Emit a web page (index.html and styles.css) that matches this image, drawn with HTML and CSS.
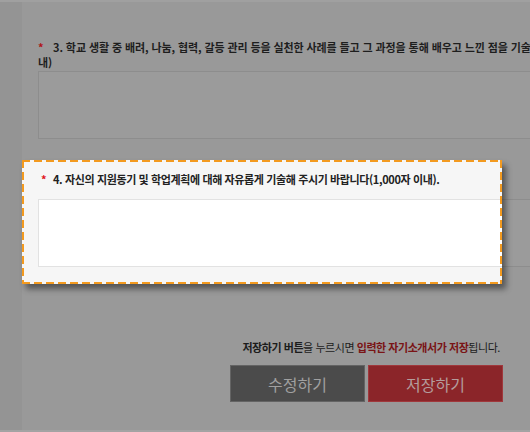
FILE: index.html
```html
<!DOCTYPE html>
<html lang="ko">
<head>
    <meta charset="UTF-8">
    <meta name="viewport" content="width=device-width, initial-scale=1.0">
    <title>자기소개서 작성</title>
    <link rel="stylesheet" href="styles.css">
</head>
<body>
    <div class="top-band"></div>
    <div class="page">
        <div class="q q3">
            <p class="q-label"><span class="req">*</span>3. 학교 생활 중 배려, 나눔, 협력, 갈등 관리 등을 실천한 사례를 들고 그 과정을 통해 배우고 느낀 점을 기술해 주시기 바랍니다(1,000자 이<br>내)</p>
            <div class="q-box"></div>
        </div>

        <div class="q q4">
            <p class="q-label hidden"><span class="req">*</span>4. 자신의 지원동기 및 학업계획에 대해 자유롭게 기술해 주시기 바랍니다(1,000자 이내).</p>
            <div class="q-box"></div>

            <div class="spotlight">
                <p class="q-label"><span class="req">*</span>4. 자신의 지원동기 및 학업계획에 대해 자유롭게 기술해 주시기 바랍니다(1,000자 이내).</p>
                <div class="q-box"></div>
            </div>
        </div>

        <div class="actions">
            <p class="notice"><b>저장하기 버튼</b>을 누르시면 <b class="red">입력한 자기소개서가 저장</b>됩니다.</p>
            <div class="btns">
                <button class="btn btn-edit">수정하기</button>
                <button class="btn btn-save">저장하기</button>
            </div>
        </div>
    </div>
    <div class="bottom-line"></div>
</body>
</html>
```

FILE: styles.css
```css
html, body {
    margin: 0;
    height: 100%;
    overflow: hidden;
}
body {
    background-color: #949494;
    font-family: "Noto Sans CJK KR", "Noto Sans", sans-serif;
    position: relative;
}
.top-band {
    height: 2px;
    background-color: #a0a0a0;
}
.page {
    margin-left: 22px;
    width: 760px;
    height: 430px;
    background-color: #999999;
}
.q {
    padding: 12px 16px 17px;
}
.q3 {
    padding-top: 38px;
    padding-bottom: 0;
}
.q-label {
    margin: 0 0 1px;
    font-size: 11px;
    line-height: 15px;
    font-weight: bold;
    letter-spacing: -0.1px;
    color: #1e1e1e;
    white-space: nowrap;
}
.req {
    display: inline-block;
    width: 15px;
    color: #b0141a;
}
.q-box {
    height: 66px;
    border: 1px solid #8d8d8d;
    background-color: #9b9b9b;
}
.q4 {
    position: relative;
    margin-top: 21px;
}
.q4 > .q-label {
    margin-bottom: 12px;
}
.hidden {
    visibility: hidden;
}
.spotlight {
    position: absolute;
    top: 0;
    left: 0;
    width: 480px;
    height: 100%;
    box-sizing: border-box;
    overflow: hidden;
    padding: 12px 16px 17px;
    background-color: #f6f6f6;
    box-shadow: 4px 5px 6px rgba(0, 0, 0, 0.45);
}
.spotlight::after {
    content: "";
    position: absolute;
    inset: 0;
    pointer-events: none;
    background:
        repeating-linear-gradient(90deg, #f39a1f 0 8px, transparent 8px 12px) top left / 100% 2px no-repeat,
        repeating-linear-gradient(90deg, #f39a1f 0 8px, transparent 8px 12px) bottom left / 100% 2px no-repeat,
        repeating-linear-gradient(180deg, #f39a1f 0 8px, transparent 8px 12px) top left / 2px 100% no-repeat,
        repeating-linear-gradient(180deg, #f39a1f 0 8px, transparent 8px 12px) top right / 2px 100% no-repeat;
}
.spotlight .q-label {
    margin-bottom: 12px;
    padding-left: 3px;
    letter-spacing: -0.38px;
    color: #222222;
}
.spotlight .req {
    width: 12px;
    color: #e0141c;
}
.spotlight .q-box {
    width: 700px;
    background-color: #ffffff;
    border-color: #e2e2e2;
}
.actions {
    width: 481px;
    margin-top: 56px;
    text-align: right;
}
.notice {
    margin: 0 3px 10px 0;
    font-size: 11px;
    line-height: 15px;
    letter-spacing: -0.45px;
    color: #1c1c1c;
}
.notice b {
    font-weight: bold;
}
.notice .red {
    color: #7a1416;
}
.btns {
    display: flex;
    justify-content: flex-end;
    gap: 3px;
}
.btn {
    width: 135px;
    height: 37px;
    font-family: "Noto Sans CJK KR", sans-serif;
    font-size: 16px;
    border: 1px solid #646464;
    cursor: pointer;
}
.btn-edit {
    background-color: #4b4b4b;
    color: #a0a0a0;
}
.btn-save {
    background-color: #8b2529;
    border-color: #a0383c;
    color: #b49c9c;
}
.bottom-line {
    position: absolute;
    left: 0;
    right: 0;
    bottom: 0;
    height: 2px;
    background-color: #a3a3a3;
}
```
